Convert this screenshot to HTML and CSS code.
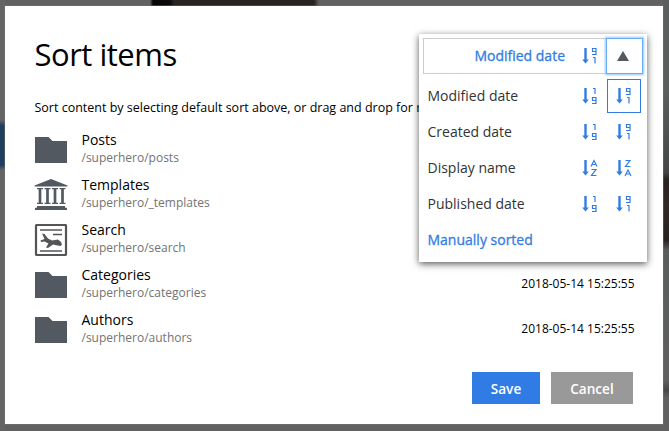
FILE: index.html
```html
<!DOCTYPE html>
<html lang="en">
<head>
<meta charset="utf-8">
<title>Sort items</title>
<link rel="stylesheet" href="styles.css">
</head>
<body>
<svg class="defs" aria-hidden="true">
  <symbol id="arrow" viewBox="0 0 16 18"><path d="M3.5 1v13" stroke-width="2.4"/><path d="M.2 12.500h6.600l-3.300 4z" fill="currentColor" stroke="none"/></symbol>
  <symbol id="nine-one" viewBox="0 0 16 18"><use href="#arrow"/><path d="M14 4.500h-3.500v-3H14v6h-4M11 10.500h2v6"/></symbol>
  <symbol id="one-nine" viewBox="0 0 16 18"><use href="#arrow"/><path d="M11 1.500h2v5.500M14 13.500h-3.500v-3H14v6h-4"/></symbol>
  <symbol id="a-z" viewBox="0 0 16 18"><use href="#arrow"/><path d="M9 7.500l3-6 3 6M10 5.500h4M9.500 10.500H14l-4.500 6h5"/></symbol>
  <symbol id="z-a" viewBox="0 0 16 18"><use href="#arrow"/><path d="M9.500 1.500H14l-4.500 6h5M9 17l3-6 3 6M10 15h4"/></symbol>
  <symbol id="folder" viewBox="0 0 34 32"><path d="M1 3h13.500l4 4H33v22H1z" fill="#535960"/></symbol>
</svg>
<div class="modal">
  <h1>Sort items</h1>
  <p class="hint">Sort content by selecting default sort above, or drag and drop for r</p>
  <ul class="items">
    <li><svg class="icon"><use href="#folder"/></svg><div class="text"><b>Posts</b><span>/superhero/posts</span></div></li>
    <li><svg class="icon" viewBox="0 0 34 32"><path d="M17 0l16.500 6.500V7.500H.5V6.500zM3 27h28v1.500l2 .5v2H1v-2l2-.5z" fill="#535960"/><path d="M3 9.700h6M10.500 9.700h6M18 9.700h6M25.500 9.700h6M3 24.300h6M10.500 24.300h6M18 24.300h6M25.500 24.300h6" stroke="#535960" stroke-width="1.300"/><path d="M6 9.500v15M13.500 9.500v15M21 9.500v15M28.500 9.500v15" stroke="#535960" stroke-width="2.700"/></svg><div class="text"><b>Templates</b><span>/superhero/_templates</span></div></li>
    <li><svg class="icon" viewBox="0 0 34 32"><rect x="2" y="1" width="30" height="30" rx=".8" fill="#fff" stroke="#535557" stroke-width="2.200"/><path d="M6 6h22M19 10.500h9M6 27h22" stroke="#535557" stroke-width="1.700"/><path d="M8 9.500l2.500.5 3.500 4.500 4 2 6-1 3 2.500 1 2.500-1.500 1.500-3-.5-4.500-1-5 3.500-2-.5 2.500-4-4-2-3.500.5-.5-1.500 4-1.500z" fill="#535557"/></svg><div class="text"><b>Search</b><span>/superhero/search</span></div></li>
    <li><svg class="icon"><use href="#folder"/></svg><div class="text"><b>Categories</b><span>/superhero/categories</span></div><time>2018-05-14 15:25:55</time></li>
    <li><svg class="icon"><use href="#folder"/></svg><div class="text"><b>Authors</b><span>/superhero/authors</span></div><time>2018-05-14 15:25:55</time></li>
  </ul>
  <div class="actions"><button class="save">Save</button><button class="cancel">Cancel</button></div>
  <div class="menu">
    <div class="current"><span>Modified date</span><svg class="sort"><use href="#nine-one"/></svg><div class="toggle"><svg width="12" height="10"><path d="M6 0l6 10H0z" fill="#535960"/></svg></div></div>
    <div class="option"><span>Modified date</span><i><svg class="sort"><use href="#one-nine"/></svg></i><i class="selected"><svg class="sort"><use href="#nine-one"/></svg></i></div>
    <div class="option"><span>Created date</span><i><svg class="sort"><use href="#one-nine"/></svg></i><i><svg class="sort"><use href="#nine-one"/></svg></i></div>
    <div class="option"><span>Display name</span><i><svg class="sort"><use href="#a-z"/></svg></i><i><svg class="sort"><use href="#z-a"/></svg></i></div>
    <div class="option"><span>Published date</span><i><svg class="sort"><use href="#one-nine"/></svg></i><i><svg class="sort"><use href="#nine-one"/></svg></i></div>
    <div class="option manual"><span>Manually sorted</span></div>
  </div>
</div>
</body>
</html>
```
FILE: styles.css
```css
* { box-sizing: border-box; }
body {
  margin: 0;
  width: 669px;
  height: 431px;
  padding: 6px 6px 7px 5px;
  overflow: hidden;
  font-family: "Open Sans", "Noto Sans", sans-serif;
  color: #000;
  background:
    linear-gradient(90deg, transparent 150px, #060606 153px, #0b0a09 170px, #292321 174px, #292321 314px, transparent 319px) 0 0 / 100% 6px no-repeat,
    linear-gradient(#646464 120px, #1f3d5e 126px, #1f3d5e 165px, #646464 170px) 0 0 / 5px 100% no-repeat,
    linear-gradient(#5b5e5d 0, #5b5e5d 90px, #454746 172px, #282220 180px, #352825 205px, #282220 240px, #5a5c5c 250px, #606060 380px, #484848 390px, #606060 398px) 100% 0 / 6px 100% no-repeat,
    #616161;
}
.defs { position: absolute; width: 0; height: 0; }
.modal {
  position: relative;
  height: 418px;
  padding: 27px 28px 0 29.5px;
  background: #fff;
  box-shadow: 0 0 0 1px rgba(120, 115, 115, .45);
}
h1 { margin: 0; font-size: 31px; letter-spacing: -.5px; line-height: 42px; font-weight: 400; }
.hint { margin: 23px 0 0; font-size: 12.5px; line-height: 20px; white-space: nowrap; }
.items { margin: 9px 0 0; padding: 0; list-style: none; }
.items li { display: flex; align-items: center; height: 45px; margin-left: -.5px; }
.icon { width: 34px; height: 32px; margin-right: 13.5px; }
.text { flex: 1; padding-bottom: 2px; }
.text b, .text span { display: block; font-weight: 400; }
.text b { font-size: 14px; line-height: 18px; }
.text span { font-size: 12px; line-height: 17px; color: #737373; }
time { font-size: 12px; padding: 0 .5px 2px 0; }
.actions { display: flex; justify-content: flex-end; gap: 11px; margin: 20px 2px 0 0; }
button {
  height: 32px;
  padding: 0;
  border: 0;
  font: 600 13.6px "Open Sans", sans-serif;
  color: #fff;
}
.save { width: 68px; background: #317ce4; }
.cancel { width: 82px; background: #999; }
.menu {
  position: absolute;
  top: 28px;
  left: 414px;
  width: 228px;
  height: 228px;
  padding: 4px;
  background: #fff;
  box-shadow: 0 2px 7px rgba(0, 0, 0, .65);
}
.current {
  display: flex;
  align-items: center;
  height: 36px;
  margin-bottom: 4px;
  border: 1px solid #ccc;
  font-size: 14px;
  color: #317ce4;
}
.current span { flex: 1; text-align: right; padding: 0 17px 2px 0; -webkit-text-stroke: .3px currentColor; }
.sort { display: block; width: 16px; height: 18px; fill: none; stroke: currentColor; stroke-width: 1.2; }
.toggle {
  display: flex;
  align-items: center;
  justify-content: center;
  width: 37px;
  height: 36px;
  padding-right: 4px;
  margin-left: 8px;
  margin-right: -1px;
  border: 1px solid #68adf5;
  box-shadow: 0 0 2px 1px #93c6fb;
}
.option { display: flex; align-items: center; height: 36px; padding: 0 2px 0 4.5px; font-size: 14px; color: #333; }
.option span { flex: 1; padding-bottom: 2px; }
.option i { display: flex; align-items: center; justify-content: center; width: 34px; height: 34px; color: #317ce4; }
.option .selected { border: 1px solid #317ce4; }
.option.manual { color: #317ce4; }
.manual span { -webkit-text-stroke: .3px currentColor; }
```
